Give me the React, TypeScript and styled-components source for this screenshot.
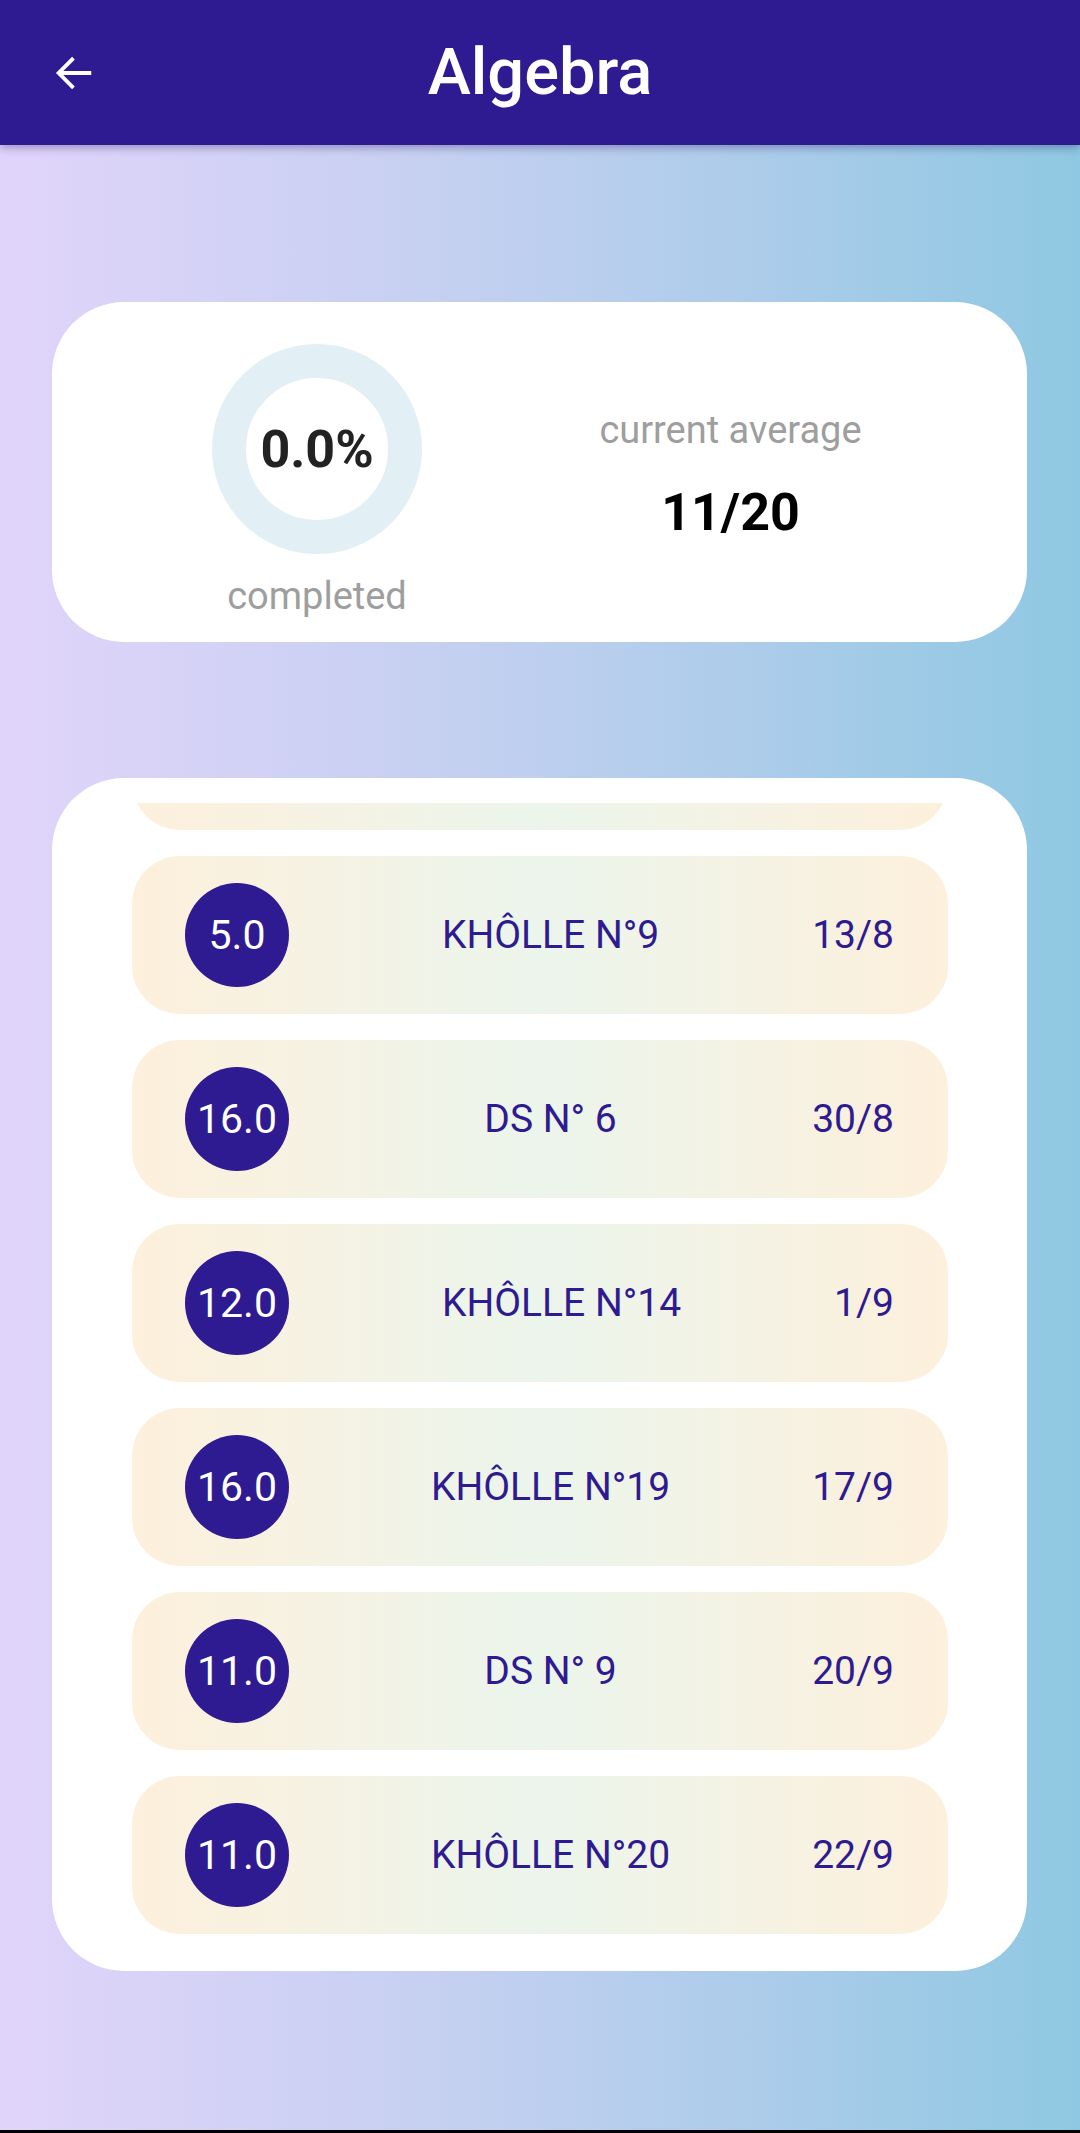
import React from "react";
import styled, { createGlobalStyle } from "styled-components";

const GlobalStyle = createGlobalStyle`
  html, body { margin: 0; padding: 0; }
  body { font-family: Roboto, "Noto Sans", Arial, sans-serif; }
  * { box-sizing: border-box; }
`;

const Page = styled.div`
  width: 1080px;
  height: 2133px;
  display: flex;
  flex-direction: column;
  background: linear-gradient(90deg, #e1d4fa 0%, #c6d0f1 40%, #acccea 70%, #8fc8e2 100%);
  overflow: hidden;
`;

const Header = styled.header`
  height: 145px;
  flex-shrink: 0;
  background: #2e1a91;
  display: flex;
  align-items: center;
  justify-content: center;
  position: relative;
  box-shadow: 0 3px 8px rgba(40, 20, 100, 0.35);
  z-index: 1;
`;

const BackButton = styled.button`
  position: absolute;
  left: 44px;
  top: 50%;
  transform: translateY(-50%);
  width: 60px;
  height: 60px;
  border: none;
  background: transparent;
  padding: 0;
  display: flex;
  align-items: center;
  justify-content: center;
`;

const Title = styled.h1`
  margin: 0;
  color: #ffffff;
  font-family: Roboto, sans-serif;
  font-weight: 500;
  font-size: 65px;
  line-height: 1;
`;

const Content = styled.main`
  display: flex;
  flex-direction: column;
  padding: 157px 53px 0 52px;
  gap: 136px;
`;

const StatsCard = styled.section`
  height: 340px;
  background: #ffffff;
  border-radius: 72px;
  display: grid;
  grid-template-columns: 530px 1fr;
  align-items: center;
`;

const ProgressColumn = styled.div`
  display: flex;
  flex-direction: column;
  align-items: center;
`;

const Ring = styled.div`
  width: 210px;
  height: 210px;
  border-radius: 50%;
  border: 34px solid #e2f0f6;
  display: flex;
  align-items: center;
  justify-content: center;
  margin-top: 15px;
`;

const Percent = styled.span`
  font-family: Roboto, sans-serif;
  font-weight: 700;
  font-size: 52px;
  color: #222222;
`;

const Caption = styled.span<{ $gap?: number }>`
  font-family: Roboto, sans-serif;
  font-size: 38px;
  color: #9e9e9e;
  line-height: 1;
  margin-top: ${(p) => p.$gap ?? 0}px;
`;

const AverageColumn = styled.div`
  display: flex;
  flex-direction: column;
  align-items: center;
  gap: 38px;
  margin-left: -148px;
  margin-top: 6px;
`;

const AverageValue = styled.span`
  font-family: Roboto, sans-serif;
  font-weight: 700;
  font-size: 52px;
  color: #000000;
  line-height: 1;
`;

const ListCard = styled.section`
  background: #ffffff;
  border-radius: 72px;
  padding: 25px 79px 37px 80px;
`;

const Viewport = styled.div`
  height: 1131px;
  overflow: hidden;
`;

const List = styled.ul`
  list-style: none;
  margin: -131px 0 0 0;
  padding: 0;
  display: flex;
  flex-direction: column;
  gap: 26px;
`;

const Row = styled.li`
  height: 158px;
  border-radius: 48px;
  background: linear-gradient(90deg, #fdf0dc 0%, #ecf5ec 50%, #fdf0dc 100%);
  display: flex;
  align-items: center;
  padding: 0 54px 0 53px;
`;

const ScoreBadge = styled.div`
  width: 104px;
  height: 104px;
  flex-shrink: 0;
  border-radius: 50%;
  background: #2e1a91;
  color: #ffffff;
  font-family: Roboto, sans-serif;
  font-size: 41px;
  display: flex;
  align-items: center;
  justify-content: center;
  white-space: nowrap;
`;

const RowTitle = styled.span`
  flex: 1;
  text-align: center;
  font-family: Roboto, sans-serif;
  font-size: 39px;
  color: #2e1a91;
`;

const RowDate = styled.span`
  font-family: Roboto, sans-serif;
  font-size: 39px;
  color: #2e1a91;
`;

const BottomBar = styled.div`
  margin-top: auto;
  height: 3px;
  background: #000000;
  flex-shrink: 0;
`;

const items = [
  { score: "14.0", title: "DS N° 5", date: "9/8" },
  { score: "5.0", title: "KHÔLLE N°9", date: "13/8" },
  { score: "16.0", title: "DS N° 6", date: "30/8" },
  { score: "12.0", title: "KHÔLLE N°14", date: "1/9" },
  { score: "16.0", title: "KHÔLLE N°19", date: "17/9" },
  { score: "11.0", title: "DS N° 9", date: "20/9" },
  { score: "11.0", title: "KHÔLLE N°20", date: "22/9" },
];

export default function App() {
  return (
    <>
      <GlobalStyle />
      <Page>
        <Header>
          <BackButton aria-label="back">
            <svg width="46" height="46" viewBox="0 0 24 24" fill="none">
              <path d="M20 12H4.5M11 5L4 12l7 7" stroke="#ffffff" strokeWidth="2" strokeLinecap="square" />
            </svg>
          </BackButton>
          <Title>Algebra</Title>
        </Header>
        <Content>
          <StatsCard>
            <ProgressColumn>
              <Ring>
                <Percent>0.0%</Percent>
              </Ring>
              <Caption $gap={23}>completed</Caption>
            </ProgressColumn>
            <AverageColumn>
              <Caption>current average</Caption>
              <AverageValue>11/20</AverageValue>
            </AverageColumn>
          </StatsCard>
          <ListCard>
            <Viewport>
              <List>
                {items.map((it, i) => (
                  <Row key={i}>
                    <ScoreBadge>{it.score}</ScoreBadge>
                    <RowTitle>{it.title}</RowTitle>
                    <RowDate>{it.date}</RowDate>
                  </Row>
                ))}
              </List>
            </Viewport>
          </ListCard>
        </Content>
        <BottomBar />
      </Page>
    </>
  );
}
